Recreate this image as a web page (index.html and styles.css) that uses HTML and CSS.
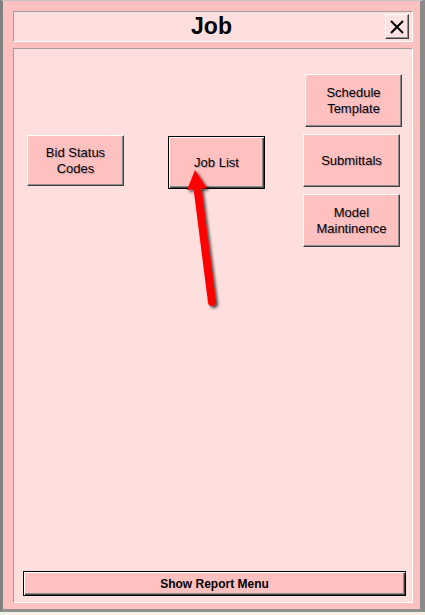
FILE: index.html
```html
<!DOCTYPE html>
<html lang="en">
<head>
<meta charset="utf-8">
<title>Job</title>
<link rel="stylesheet" href="styles.css">
</head>
<body>
<div class="frame">
  <div class="titlebar">
    <span class="spacer"></span>
    <h1 class="title">Job</h1>
    <button class="close" aria-label="Close">
      <svg width="14" height="14" viewBox="0 0 14 14"><path d="M1 1 L13 13 M13 1 L1 13" stroke="#000" stroke-width="2" fill="none"/></svg>
    </button>
  </div>
  <div class="panel">
    <div class="row">
      <div class="col col-left">
        <button class="btn btn-bid">Bid Status<br>Codes</button>
      </div>
      <div class="col col-mid">
        <button class="btn btn-default btn-job">Job List</button>
      </div>
      <div class="col col-right">
        <button class="btn btn-sched">Schedule<br>Template</button>
        <button class="btn">Submittals</button>
        <button class="btn">Model<br>Maintinence</button>
      </div>
    </div>
    <button class="btn btn-default btn-report">Show Report Menu</button>
  </div>
</div>
<svg class="arrow" width="425" height="615" viewBox="0 0 425 615">
  <defs>
    <filter id="sh" x="-50%" y="-20%" width="200%" height="140%">
      <feDropShadow dx="2" dy="2" stdDeviation="1.6" flood-color="#000" flood-opacity="0.7"/>
    </filter>
  </defs>
  <g filter="url(#sh)" fill="#ff0000">
    <line x1="197.5" y1="188" x2="212" y2="302" stroke="#ff0000" stroke-width="8" stroke-linecap="round"/>
    <polygon points="195,170 207,188 187,190"/>
  </g>
</svg>
</body>
</html>
```

FILE: styles.css
```css
html, body {
  margin: 0;
  padding: 0;
}

body {
  width: 425px;
  height: 615px;
  background: #f6f3e6;
  position: relative;
  overflow: hidden;
  font-family: "Liberation Sans", Arial, sans-serif;
}

.frame {
  box-sizing: border-box;
  width: 425px;
  height: 612px;
  background: #ffc0c0;
  border-left: 3px solid #808080;
  border-top: 1px solid #c4c4c4;
  border-right: 5px solid #8a8a8a;
  border-bottom: 3px solid #909090;
  padding: 10px 7px 6px 10px;
  display: flex;
  flex-direction: column;
  gap: 6px;
}

.titlebar {
  box-sizing: border-box;
  height: 31px;
  flex: none;
  background: #ffdede;
  border-top: 1px solid #a0a0a0;
  border-left: 1px solid #a0a0a0;
  border-bottom: 1px solid #ffffff;
  border-right: 1px solid #ffffff;
  display: grid;
  grid-template-columns: 1fr auto 1fr;
  align-items: center;
  padding-right: 3px;
}

.title {
  margin: 0;
  font-size: 23px;
  font-weight: bold;
  line-height: 1;
  color: #000;
}

.close {
  justify-self: end;
  box-sizing: border-box;
  width: 24px;
  height: 25px;
  padding: 0;
  margin: 0;
  background: #ffe2e2;
  border: 1px solid;
  border-color: #ffffff #404040 #404040 #ffffff;
  box-shadow: inset -1px -1px 0 #909090;
  display: flex;
  align-items: center;
  justify-content: center;
}

.close svg {
  display: block;
}

.panel {
  flex: 1;
  box-sizing: border-box;
  background: #ffdede;
  border-top: 1px solid #a0a0a0;
  border-left: 1px solid #a0a0a0;
  border-bottom: 1px solid #ffffff;
  border-right: 1px solid #ffffff;
  padding: 0 6px 6px 9px;
  display: flex;
  flex-direction: column;
}

.row {
  display: flex;
  align-items: flex-start;
  margin-top: 25px;
}

.col {
  display: flex;
  flex-direction: column;
  gap: 7px;
}

.col-left {
  margin-left: 4px;
  margin-top: 61px;
}

.col-mid {
  margin-left: 44px;
  margin-top: 62px;
}

.col-right {
  margin-left: 38px;
}

.btn {
  box-sizing: border-box;
  width: 97px;
  height: 53px;
  margin: 0;
  padding: 0;
  background: #ffc0c0;
  color: #000;
  font-family: "Liberation Sans", Arial, sans-serif;
  font-size: 13px;
  line-height: 16px;
  text-align: center;
  border: 1px solid;
  border-color: #ffffff #404040 #404040 #ffffff;
  box-shadow: inset -1px -1px 0 #8c8c8c;
  text-shadow: 1px 1px 0 rgba(70, 70, 110, 0.3);
}

.btn-bid {
  height: 51px;
}

.btn-sched {
  margin-left: 2px;
}

.btn-default {
  border: 1px solid #000;
  box-shadow: inset 1px 1px 0 #ffffff, inset -1px -1px 0 #404040, inset -2px -2px 0 #8c8c8c;
}

.btn-report {
  width: auto;
  height: 25px;
  margin-top: auto;
  font-size: 12px;
  font-weight: bold;
  text-shadow: none;
}

.arrow {
  position: absolute;
  left: 0;
  top: 0;
  pointer-events: none;
}
```
